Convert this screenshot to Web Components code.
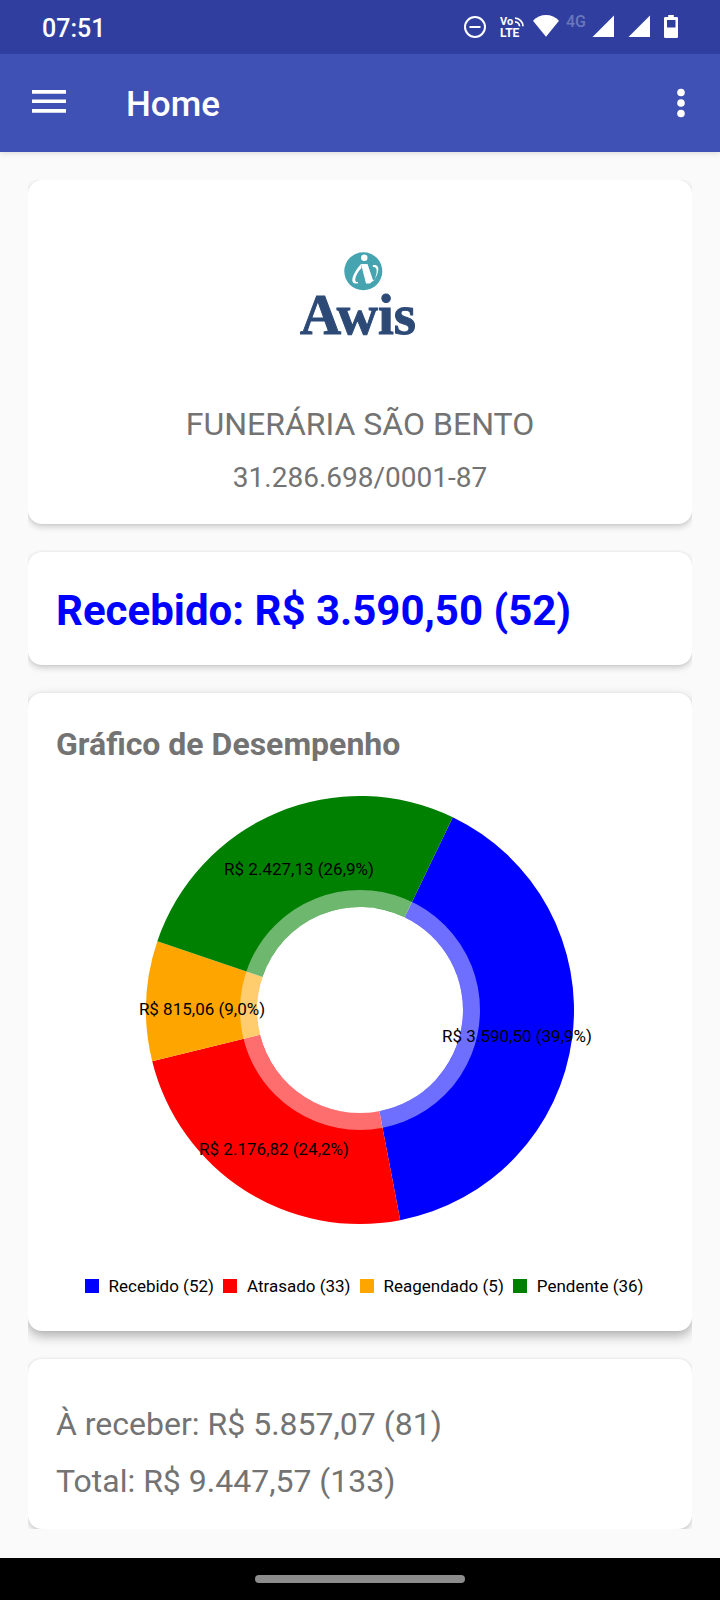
<!DOCTYPE html>
<html lang="pt-BR">
<head>
<meta charset="utf-8">
<meta name="viewport" content="width=device-width, initial-scale=1">
<title>Home</title>
<style>
  html { background: #fafafa; }
  body { margin: 0; font-family: Roboto, "Noto Sans", sans-serif; color: #737373; }
</style>
</head>
<body>
<home-screen>
  <status-bar slot="top" time="07:51"></status-bar>
  <app-bar slot="top">Home</app-bar>
  <info-card>
    <company-header name="FUNERÁRIA SÃO BENTO" document="31.286.698/0001-87"></company-header>
  </info-card>
  <info-card>
    <received-total>Recebido: R$ 3.590,50 (52)</received-total>
  </info-card>
  <info-card raised>
    <performance-chart>Gráfico de Desempenho</performance-chart>
  </info-card>
  <info-card>
    <summary-lines>
      <p>À receber: R$ 5.857,07 (81)</p>
      <p>Total: R$ 9.447,57 (133)</p>
    </summary-lines>
  </info-card>
  <gesture-bar slot="bottom"></gesture-bar>
</home-screen>

<script>
class Base extends HTMLElement {
  connectedCallback() {
    if (this.shadowRoot) return;
    const t = document.createElement('template');
    t.innerHTML = this.render();
    this.attachShadow({ mode: 'open' }).append(t.content.cloneNode(true));
  }
}

customElements.define('home-screen', class extends Base {
  render() {
    return `<style>
      :host { display: flex; flex-direction: column; min-height: 100vh; background: #fafafa; }
      header { position: relative; box-shadow: 0 1px 6px rgba(0,0,0,.14); }
      main { flex: 1; padding: 28px; }
      .list { display: flex; flex-direction: column; gap: 28px; overflow: hidden; }
    </style>
    <header><slot name="top"></slot></header>
    <main><div class="list"><slot></slot></div></main>
    <slot name="bottom"></slot>`;
  }
});

customElements.define('status-bar', class extends Base {
  render() {
    return `<style>
      :host { display: flex; align-items: center; height: 54px; padding: 0 42px; background: #303f9f; color: #fff; }
      time { flex: 1; padding-top: 4px; font-size: 25px; line-height: 32px; font-weight: 500; }
      svg { display: block; fill: #fff; }
      text { font-family: Roboto, sans-serif; }
    </style>
    <time>${this.getAttribute('time')}</time>
    <svg width="215" height="38" viewBox="463 8 215 38" role="img" aria-label="Status">
      <circle cx="475" cy="27" r="10" fill="none" stroke="#fff" stroke-width="2"/>
      <path d="M469.500 26h11v2h-11z"/>
      <text x="500" y="25" font-size="11" font-weight="700">Vo</text>
      <text x="500" y="37" font-size="12" font-weight="700">LTE</text>
      <path d="M515 18.200a8 8 0 0 1 8 8M515 21.800a4.500 4.500 0 0 1 4.500 4.500" fill="none" stroke="#fff" stroke-width="1.700"/>
      <path d="M546 36.800L533 20.800C536.500 17 541 15 546 15s9.500 2 13 5.800z"/>
      <text x="566" y="27" font-size="16" font-weight="500" fill="#6b77bd">4G</text>
      <path d="M614 15.500V37h-21.500zM650 15.500V37h-21.500z"/>
      <path fill-rule="evenodd" d="M668.200 15h5.600v2h3q1.200 0 1.200 1.200V36.800q0 1.200-1.200 1.200h-11.600q-1.200 0-1.200-1.200V18.200q0-1.200 1.200-1.200h3zM667 20v7.500h8.500V20z"/>
    </svg>`;
  }
});

customElements.define('app-bar', class extends Base {
  render() {
    return `<style>
      :host { display: flex; align-items: center; height: 98px; padding: 0 29px 0 28px; background: #3f51b5; color: #fff; }
      button { display: flex; align-items: center; justify-content: center; width: 42px; height: 56px; padding: 0; border: 0; background: none; }
      svg { display: block; fill: #fff; }
      h1 { flex: 1; margin: 0; padding: 4px 0 0 56px; font-size: 35px; line-height: 40px; font-weight: 500; }
      .more { width: 20px; }
    </style>
    <button aria-label="Abrir menu"><svg width="34" height="26" viewBox="0 0 34 26"><path d="M0 0h34v3.700H0zM0 9.400h34v3.700H0zM0 19h34v3.700H0z"/></svg></button>
    <h1><slot></slot></h1>
    <button class="more" aria-label="Mais opções"><svg width="8" height="30" viewBox="0 0 8 30"><circle cx="4" cy="4.500" r="3.800"/><circle cx="4" cy="15" r="3.800"/><circle cx="4" cy="25.500" r="3.800"/></svg></button>`;
  }
});

customElements.define('info-card', class extends Base {
  render() {
    return `<style>
      :host { display: block; background: #fff; border-radius: 14px; box-shadow: 0 3px 6px rgba(0,0,0,.18), 0 0 3px rgba(0,0,0,.08); }
      :host([raised]) { box-shadow: 0 5px 12px rgba(0,0,0,.3), 0 0 3px rgba(0,0,0,.06); }
    </style><slot></slot>`;
  }
});

customElements.define('company-header', class extends Base {
  render() {
    return `<style>
      :host { display: flex; flex-direction: column; align-items: center; gap: 16px; padding: 28px; }
      p { margin: 0; text-align: center; }
      .name { font-size: 32px; line-height: 40px; }
      .doc { font-size: 28px; line-height: 36px; }
      svg { display: block; }
    </style>
    <svg width="160" height="180" viewBox="280 208 160 180" role="img" aria-label="Awis">
      <circle cx="363.300" cy="271.300" r="19" fill="#46a3b0"/>
      <g fill="#fff">
        <circle cx="364.300" cy="257.700" r="3.200"/>
        <path d="M361 264h6.500l6 17.500c2-4 3.800-8.500 3-12-.4-1.700-1.800-2.500-3.700-2.700v-1.800c4.200-.6 6 1.500 5.500 5.200-.8 5.500-4.300 10.600-8.300 13.200h-4z"/>
        <path d="M361 264c-4.500 5-8.500 11.500-8.700 16-.1 2.800 1.700 4 5.700 3.200v-1.200c-2 .2-3-.8-2.800-2.800.4-3.500 3.200-8 6.300-11.200z"/>
      </g>
      <text x="358" y="334" text-anchor="middle" font-family="Liberation Serif, serif" font-weight="700" font-size="57" fill="#2d4a77" stroke="#2d4a77">Awis</text>
    </svg>
    <p class="name">${this.getAttribute('name')}</p>
    <p class="doc">${this.getAttribute('document')}</p>`;
  }
});

customElements.define('received-total', class extends Base {
  render() {
    return `<style>
      :host { display: block; padding: 30px 28px 26px; }
      h2 { margin: 0; color: #00f; font-size: 42px; line-height: 57px; font-weight: 700; }
    </style><h2><slot></slot></h2>`;
  }
});

const slices = [
  { label: 'Recebido (52)',  value: 3590.50, text: 'R$ 3.590,50 (39,9%)', color: '#0000ff', x: 517, y: 249 },
  { label: 'Atrasado (33)',  value: 2176.82, text: 'R$ 2.176,82 (24,2%)', color: '#ff0000', x: 274, y: 362 },
  { label: 'Reagendado (5)', value: 815.06,  text: 'R$ 815,06 (9,0%)',    color: '#ffa500', x: 202, y: 222 },
  { label: 'Pendente (36)',  value: 2427.13, text: 'R$ 2.427,13 (26,9%)', color: '#008000', x: 299, y: 82 }
];

customElements.define('performance-chart', class extends Base {
  render() {
    const cx = 360, cy = 217, R = 214, r = 103;
    const total = slices.reduce((s, d) => s + d.value, 0);
    const point = (deg, rad) => {
      const a = deg * Math.PI / 180;
      return (cx + rad * Math.sin(a)).toFixed(2) + ' ' + (cy - rad * Math.cos(a)).toFixed(2);
    };
    let start = 25.7, wedges = '';
    for (const d of slices) {
      const end = start + d.value / total * 360;
      wedges += `<path fill="${d.color}" d="M${point(start, R)}A${R} ${R} 0 0 1 ${point(end, R)}L${point(end, r)}A${r} ${r} 0 0 0 ${point(start, r)}z"/>`;
      start = end;
    }
    return `<style>
      :host { display: block; padding: 30px 28px; }
      h2 { margin: 0 0 28px; font-size: 32px; line-height: 42px; font-weight: 700; }
      svg { display: block; width: 100%; height: auto; }
      text { font-family: Roboto, sans-serif; font-size: 17px; fill: #000; }
      ul { display: flex; justify-content: center; gap: 9px; margin: 44px 0 0; padding: 0 0 0 8px; list-style: none; color: #000; font-size: 17px; line-height: 30px; white-space: nowrap; }
      li { display: flex; align-items: center; gap: 10px; }
      i { width: 14px; height: 14px; }
    </style>
    <h2><slot></slot></h2>
    <svg viewBox="56 0 608 434" role="img" aria-label="Gráfico de Desempenho">
      ${wedges}
      <circle cx="${cx}" cy="${cy}" r="111.500" fill="none" stroke="#fff" stroke-opacity=".43" stroke-width="17"/>
      ${slices.map(d => `<text x="${d.x}" y="${d.y}" text-anchor="middle">${d.text}</text>`).join('')}
    </svg>
    <ul>${slices.map(d => `<li><i style="background:${d.color}"></i>${d.label}</li>`).join('')}</ul>`;
  }
});

customElements.define('summary-lines', class extends Base {
  render() {
    return `<style>
      :host { display: flex; flex-direction: column; gap: 17px; padding: 45px 28px 28px; }
      ::slotted(p) { margin: 0; font-size: 32px; line-height: 40px; }
    </style><slot></slot>`;
  }
});

customElements.define('gesture-bar', class extends Base {
  render() {
    return `<style>
      :host { display: flex; align-items: center; justify-content: center; height: 42px; background: #000; }
      span { width: 210px; height: 8px; border-radius: 4px; background: #8c8c8c; }
    </style><span></span>`;
  }
});
</script>
</body>
</html>
